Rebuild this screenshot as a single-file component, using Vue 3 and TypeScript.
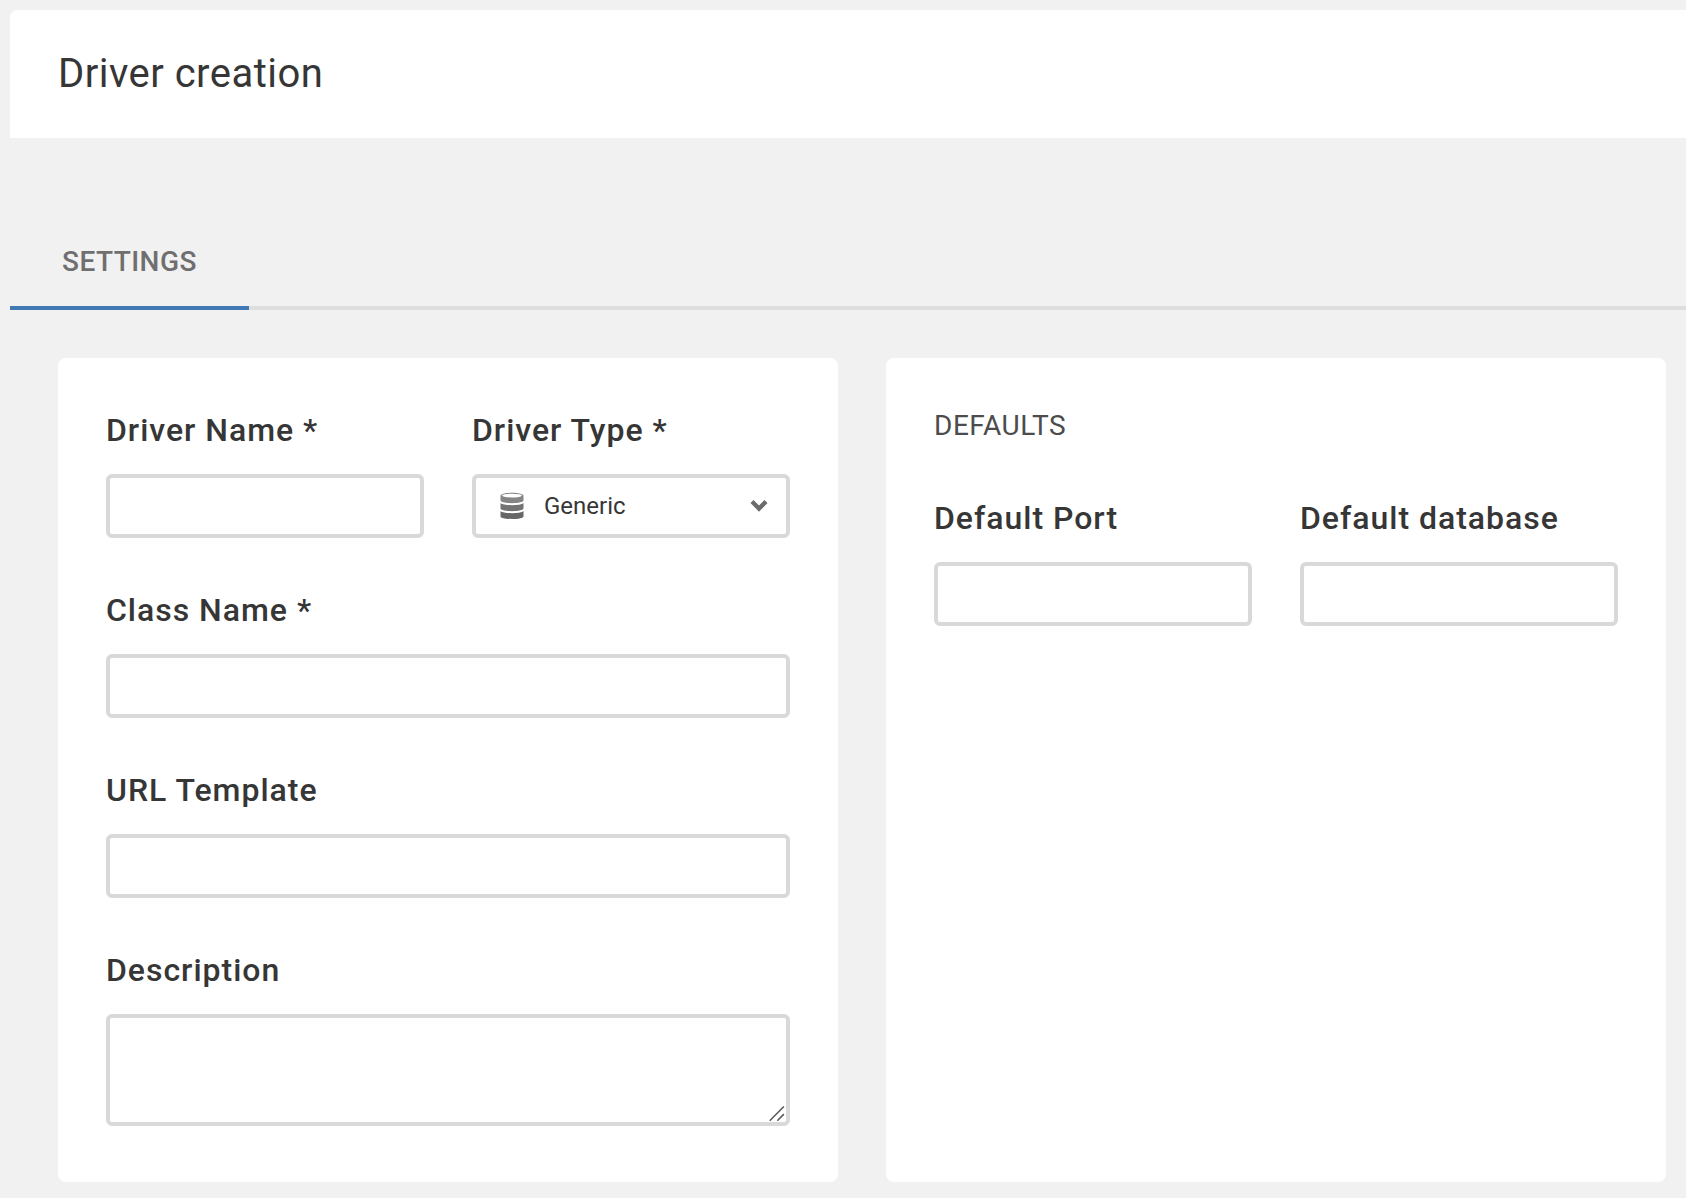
<script setup lang="ts">
import { ref } from 'vue'

const driverName = ref('')
const driverType = ref('Generic')
const className = ref('')
const urlTemplate = ref('')
const description = ref('')
const defaultPort = ref('')
const defaultDatabase = ref('')
</script>

<template>
  <main class="page">
    <header class="title-bar">
      <h1>Driver creation</h1>
    </header>
    <nav class="tabs">
      <button class="tab active" type="button">SETTINGS</button>
    </nav>
    <form class="content">
      <section class="card">
        <div class="row">
          <label class="field">
            <span class="label">Driver Name *</span>
            <input v-model="driverName" class="control" type="text" />
          </label>
          <div class="field">
            <span class="label">Driver Type *</span>
            <div class="control select">
              <svg class="db" width="24" height="28" viewBox="0 0 24 28">
                <path fill="#858585" d="M.5 3.800C.5 2 5.600.7 12 .7S23.500 2 23.500 3.800V8.600c0 1.500-5.100 2.600-11.500 2.600S.5 10.100.5 8.600z" />
                <ellipse cx="12" cy="3.600" rx="10" ry="1.900" fill="#fff" />
                <path fill="#737373" d="M.5 11.200c1.800 1.300 6.200 2 11.500 2s9.700-.7 11.500-2v5.400c0 1.500-5.100 2.600-11.500 2.600S.5 18.100.5 16.600z" />
                <path fill="#666" d="M.5 19.200c1.800 1.300 6.200 2 11.500 2s9.700-.7 11.500-2v5.200c0 1.500-5.100 2.600-11.500 2.600S.5 25.900.5 24.400z" />
              </svg>
              <span class="value">{{ driverType }}</span>
              <svg class="chevron" width="18" height="14" viewBox="0 0 18 14">
                <path d="M2 2.600l7 7 7-7" fill="none" stroke="#6b6b6b" stroke-width="4.300" />
              </svg>
            </div>
          </div>
        </div>
        <label class="field">
          <span class="label">Class Name *</span>
          <input v-model="className" class="control" type="text" />
        </label>
        <label class="field">
          <span class="label">URL Template</span>
          <input v-model="urlTemplate" class="control" type="text" />
        </label>
        <div class="field">
          <label class="label" for="description">Description</label>
          <div class="area-wrap">
            <textarea id="description" v-model="description" class="control area"></textarea>
            <svg class="grip" width="16" height="16" viewBox="0 0 16 16">
              <path d="M.7 14.700L14.900.5M8.300 14.700L14.900 8.100" stroke="#58585c" stroke-width="1.500" fill="none" />
            </svg>
          </div>
        </div>
      </section>
      <section class="card">
        <h2>DEFAULTS</h2>
        <div class="row">
          <label class="field">
            <span class="label">Default Port</span>
            <input v-model="defaultPort" class="control" type="text" />
          </label>
          <label class="field">
            <span class="label">Default database</span>
            <input v-model="defaultDatabase" class="control" type="text" />
          </label>
        </div>
      </section>
    </form>
  </main>
</template>

<style>
body {
  background: #f1f1f1;
  overflow: hidden;
}
</style>

<style scoped>
.page {
  box-sizing: border-box;
  height: 1198px;
  padding: 10px 0 0 10px;
  background: #f1f1f1;
  color: #363636;
  font-family: Roboto, sans-serif;
}
.title-bar {
  display: flex;
  align-items: center;
  height: 128px;
  padding-left: 48px;
  box-sizing: border-box;
  background: #fff;
  border-top-left-radius: 8px;
}
h1 {
  margin: 0;
  font-size: 40px;
  line-height: 48px;
  font-weight: 400;
  letter-spacing: 0.48px;
}
.tabs {
  display: flex;
  height: 100px;
  margin-top: 72px;
  box-shadow: inset 0 -4px #dedede;
}
.tab {
  box-sizing: border-box;
  width: 239px;
  padding: 7px 0 0 52px;
  border: 0;
  border-bottom: 4px solid #4179b5;
  background: none;
  color: #6f6f6f;
  font: 500 28px/41px Roboto, sans-serif;
  letter-spacing: 0.46px;
  text-align: left;
}
.content {
  display: flex;
  gap: 48px;
  padding: 48px 20px 0 48px;
}
.card {
  display: flex;
  flex-direction: column;
  gap: 48px;
  box-sizing: border-box;
  width: 780px;
  height: 824px;
  padding: 48px;
  border-radius: 8px;
  background: #fff;
}
h2 {
  margin: 0;
  color: #4c4c4c;
  font-size: 28px;
  line-height: 40px;
  font-weight: 400;
  letter-spacing: 0.5px;
}
.row {
  display: flex;
  gap: 48px;
}
.field {
  display: flex;
  flex: 0 0 auto;
  flex-direction: column;
  gap: 20px;
}
.row .field {
  flex: 1 1 0;
  min-width: 0;
}
.label {
  font-size: 32px;
  line-height: 48px;
  font-weight: 500;
  letter-spacing: 0.98px;
  white-space: nowrap;
}
.control {
  display: block;
  box-sizing: border-box;
  width: 100%;
  height: 64px;
  margin: 0;
  padding: 0 24px;
  border: 4px solid #d9d9d9;
  border-radius: 6px;
  outline: none;
  background: #fff;
  color: inherit;
  font: 400 24px Roboto, sans-serif;
}
.select {
  display: flex;
  align-items: center;
  padding: 0 18.500px 0 23.500px;
}
.value {
  flex: 1;
  margin-left: 20.500px;
}
.area-wrap {
  position: relative;
}
.area {
  height: 112px;
  resize: none;
}
.grip {
  position: absolute;
  right: 5px;
  bottom: 4px;
}
</style>
